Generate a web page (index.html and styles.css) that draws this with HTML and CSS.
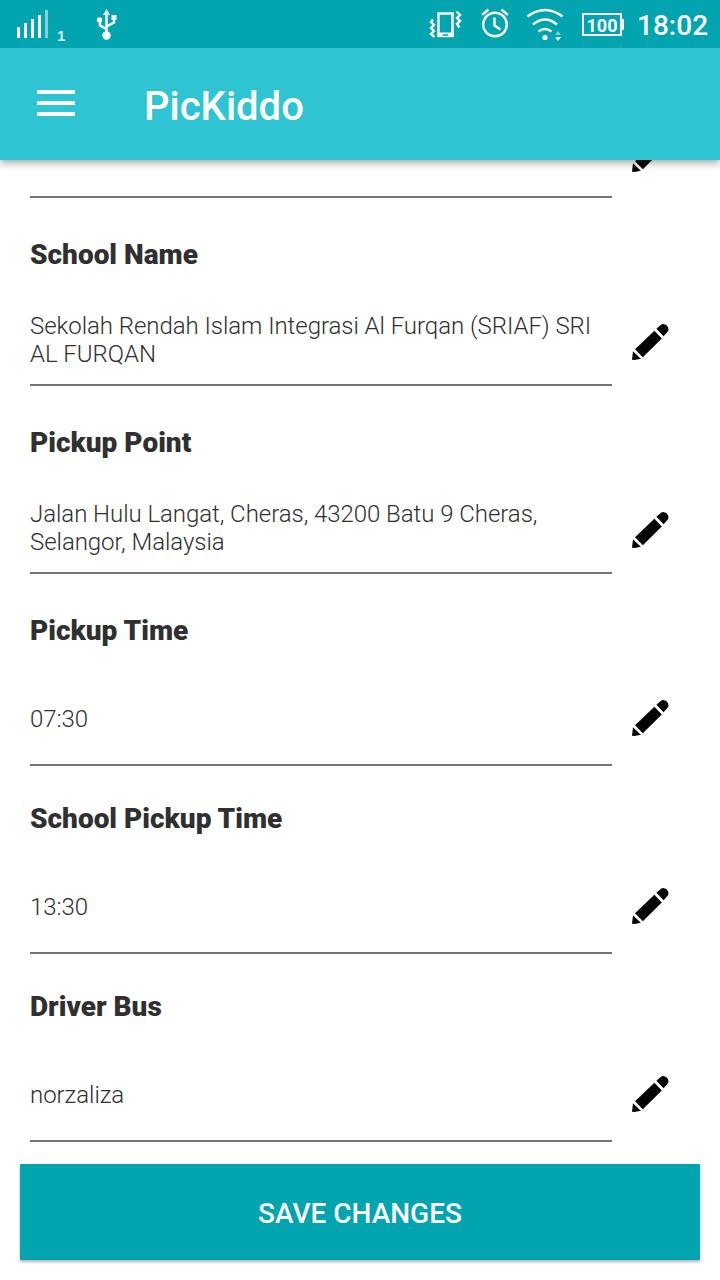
FILE: index.html
```
<!DOCTYPE html>
<html>
<head>
	<meta charset="utf-8">
	<title>PicKiddo</title>
	<link rel="stylesheet" href="styles.css">
</head>
<body>
	<!-- pencil, used in every row -->
	<svg class="defs" width="0" height="0">
		<symbol id="pencil" viewBox="0 0 40 40">
			<path d="M2 37.8L3 29.2L10.8 36.8L4.5 38Z"/>
			<path d="M5 27.2L24.4 8.8L31.8 16.4L12.8 35.2Z"/>
			<path d="M26.4 6.8L30.6 3Q33.6 .8 36.8 3.6Q39.8 7 37.4 10L33.6 14.2Z"/>
		</symbol>
	</svg>
	<div class="status">
		<svg class="signal" width="32" height="30" viewBox="0 0 32 30">
			<path d="M1 18h3v11H1zM8 14h3v15H8zM15 10h3v19h-3zM22 6h3v23h-3z"/>
			<path class="weak" d="M29 1h3v28h-3z"/>
		</svg>
		<span class="sim">1</span>
		<svg class="usb" width="22" height="32" viewBox="0 0 22 32">
			<path class="line" d="M10.5 5v20M10.5 20L4 16.5V11M10.5 17.5L18 13.5V8"/>
			<path d="M10.5 0L14 6H7zM15.5 6h5v5h-5z"/>
			<circle cx="3.5" cy="11" r="2.7"/>
			<circle cx="10.5" cy="26.5" r="4.2"/>
		</svg>
		<svg class="vibrate" width="34" height="32" viewBox="0 0 34 32">
			<path class="line" d="M9.5 4.5h14v22h-14z"/>
			<path d="M8.3 23.5h16.4v4.7H8.3z"/>
			<path class="gap" d="M13.5 26h5.5"/>
			<path class="line" d="M4 10.5L2 13L5 16L2 19L5 22L2 25L5.500 28M27.500 2.500L31 6L28 9L31 12L28 15L30.500 18.500"/>
		</svg>
		<svg class="alarm" width="28" height="30" viewBox="0 0 28 30">
			<circle class="line" cx="14" cy="16.5" r="11.8"/>
			<path class="line" d="M13.500 9.500V17.500L19.500 21.500M1.200 6.800L7.500 1.500M26.800 6.800L20.500 1.500"/>
		</svg>
		<svg class="wifi" width="38" height="34" viewBox="0 0 38 34">
			<path class="line" d="M1.5 8.500Q19 -4.500 36.500 8.500M7 16.500Q19 6.500 31 16.500M12.500 23.500Q19 18.500 25.500 23.500"/>
			<circle cx="19" cy="29.500" r="2.600"/>
			<path class="weak" d="M32 23L35 27H29z"/>
			<path d="M29 29H35L32 33z"/>
		</svg>
		<div class="battery">100</div>
		<span class="time">18:02</span>
	</div>
	<div class="bar">
		<div class="menu"><i></i><i></i><i></i></div>
		<h1>PicKiddo</h1>
	</div>
	<div class="form">
		<div class="row first">
			<div class="value long"></div>
			<svg class="edit"><use href="#pencil"/></svg>
		</div>
		<h2>School Name</h2>
		<div class="row">
			<div class="value long">Sekolah Rendah Islam Integrasi Al Furqan (SRIAF) SRI<br>AL FURQAN</div>
			<svg class="edit"><use href="#pencil"/></svg>
		</div>
		<h2>Pickup Point</h2>
		<div class="row">
			<div class="value long">Jalan Hulu Langat, Cheras, 43200 Batu 9 Cheras,<br>Selangor, Malaysia</div>
			<svg class="edit"><use href="#pencil"/></svg>
		</div>
		<h2>Pickup Time</h2>
		<div class="row">
			<div class="value">07:30</div>
			<svg class="edit"><use href="#pencil"/></svg>
		</div>
		<h2>School Pickup Time</h2>
		<div class="row">
			<div class="value">13:30</div>
			<svg class="edit"><use href="#pencil"/></svg>
		</div>
		<h2>Driver Bus</h2>
		<div class="row">
			<div class="value">norzaliza</div>
			<svg class="edit"><use href="#pencil"/></svg>
		</div>
	</div>
	<button class="save">SAVE CHANGES</button>
</body>
</html>
```
FILE: styles.css
```
body,h1,h2{margin: 0;padding: 0;}
body{
	display: flex;
	flex-direction: column;
	height: 1280px;
	overflow: hidden;
	background: #fff;
	color: #303030;
	font-family: Roboto, sans-serif;
}
svg{display: block;flex: none;}
.defs{height: 0;}
/* status bar */
.status{
	position: relative;
	z-index: 2;
	display: flex;
	align-items: flex-start;
	flex: none;
	height: 48px;
	background: #02a4b0;
	color: #fff;
}
.status svg{fill: #fff;}
.status .line{fill: none;stroke: #fff;stroke-width: 2.4;}
.status .weak{opacity: .5;}
.status .gap{stroke: #02a4b0;stroke-width: 1.5;}
.signal{margin: 9px 0 0 16px;}
.sim{width: 9px;margin: 27px 0 0 9px;font: 700 15px/17px "Liberation Sans", sans-serif;opacity: .85;}
.usb{margin: 9px 0 0 30px;}
.vibrate{margin: 9px 0 0 311px;}
.alarm{margin: 8px 0 0 18px;}
.wifi{margin: 8px 0 0 17px;}
.battery{
	position: relative;
	box-sizing: border-box;
	width: 40px;
	height: 23px;
	margin: 13px 0 0 18px;
	border: 2px solid #fff;
	font-size: 18px;
	font-weight: 700;
	line-height: 21px;
	text-align: center;
}
.battery:after{
	content: "";
	position: absolute;
	top: 4px;
	right: -4px;
	width: 2px;
	height: 11px;
	background: #fff;
}
.time{margin: 9px 0 0 15px;font-size: 28px;font-weight: 500;line-height: 34px;}
/* title bar */
.bar{
	position: relative;
	z-index: 1;
	display: flex;
	flex: none;
	height: 112px;
	background: #2ec4d2;
	box-shadow: 0 3px 8px rgba(0,0,0,.35);
	color: #fff;
}
.menu{
	display: flex;
	flex-direction: column;
	gap: 7px;
	width: 38px;
	margin: 42px 0 0 37px;
}
.menu i{height: 4px;background: #fff;}
.bar h1{margin: 35px 0 0 69px;font-size: 40px;font-weight: 500;line-height: 48px;}
/* fields */
.form{flex: 1;min-height: 0;}
.form h2{
	box-sizing: border-box;
	height: 48px;
	padding: 1px 0 0 30px;
	font-size: 28px;
	font-weight: 900;
	line-height: 48px;
}
.row{
	display: flex;
	align-items: center;
	height: 128px;
	margin-bottom: 12px;
}
/* scrolled under the title bar */
.first{margin-top: -70px;}
.value{
	box-sizing: border-box;
	width: 582px;
	height: 96px;
	margin-left: 30px;
	padding-top: 35px;
	border-bottom: 2px solid #757373;
	font-size: 24px;
	font-weight: 300;
	line-height: 28px;
	letter-spacing: -.05px;
	white-space: nowrap;
}
.long{height: 88px;padding-top: 14px;}
.edit{width: 40px;height: 40px;margin-left: 18px;fill: #050505;}
.save{
	flex: none;
	height: 96px;
	margin: 0 20px 20px;
	padding: 4px 0 0;
	border: 0;
	border-radius: 1px;
	background: #02a4b0;
	box-shadow: 0 2px 3px rgba(0,0,0,.3);
	color: #fff;
	font: 500 28px/34px Roboto, sans-serif;
}
```
